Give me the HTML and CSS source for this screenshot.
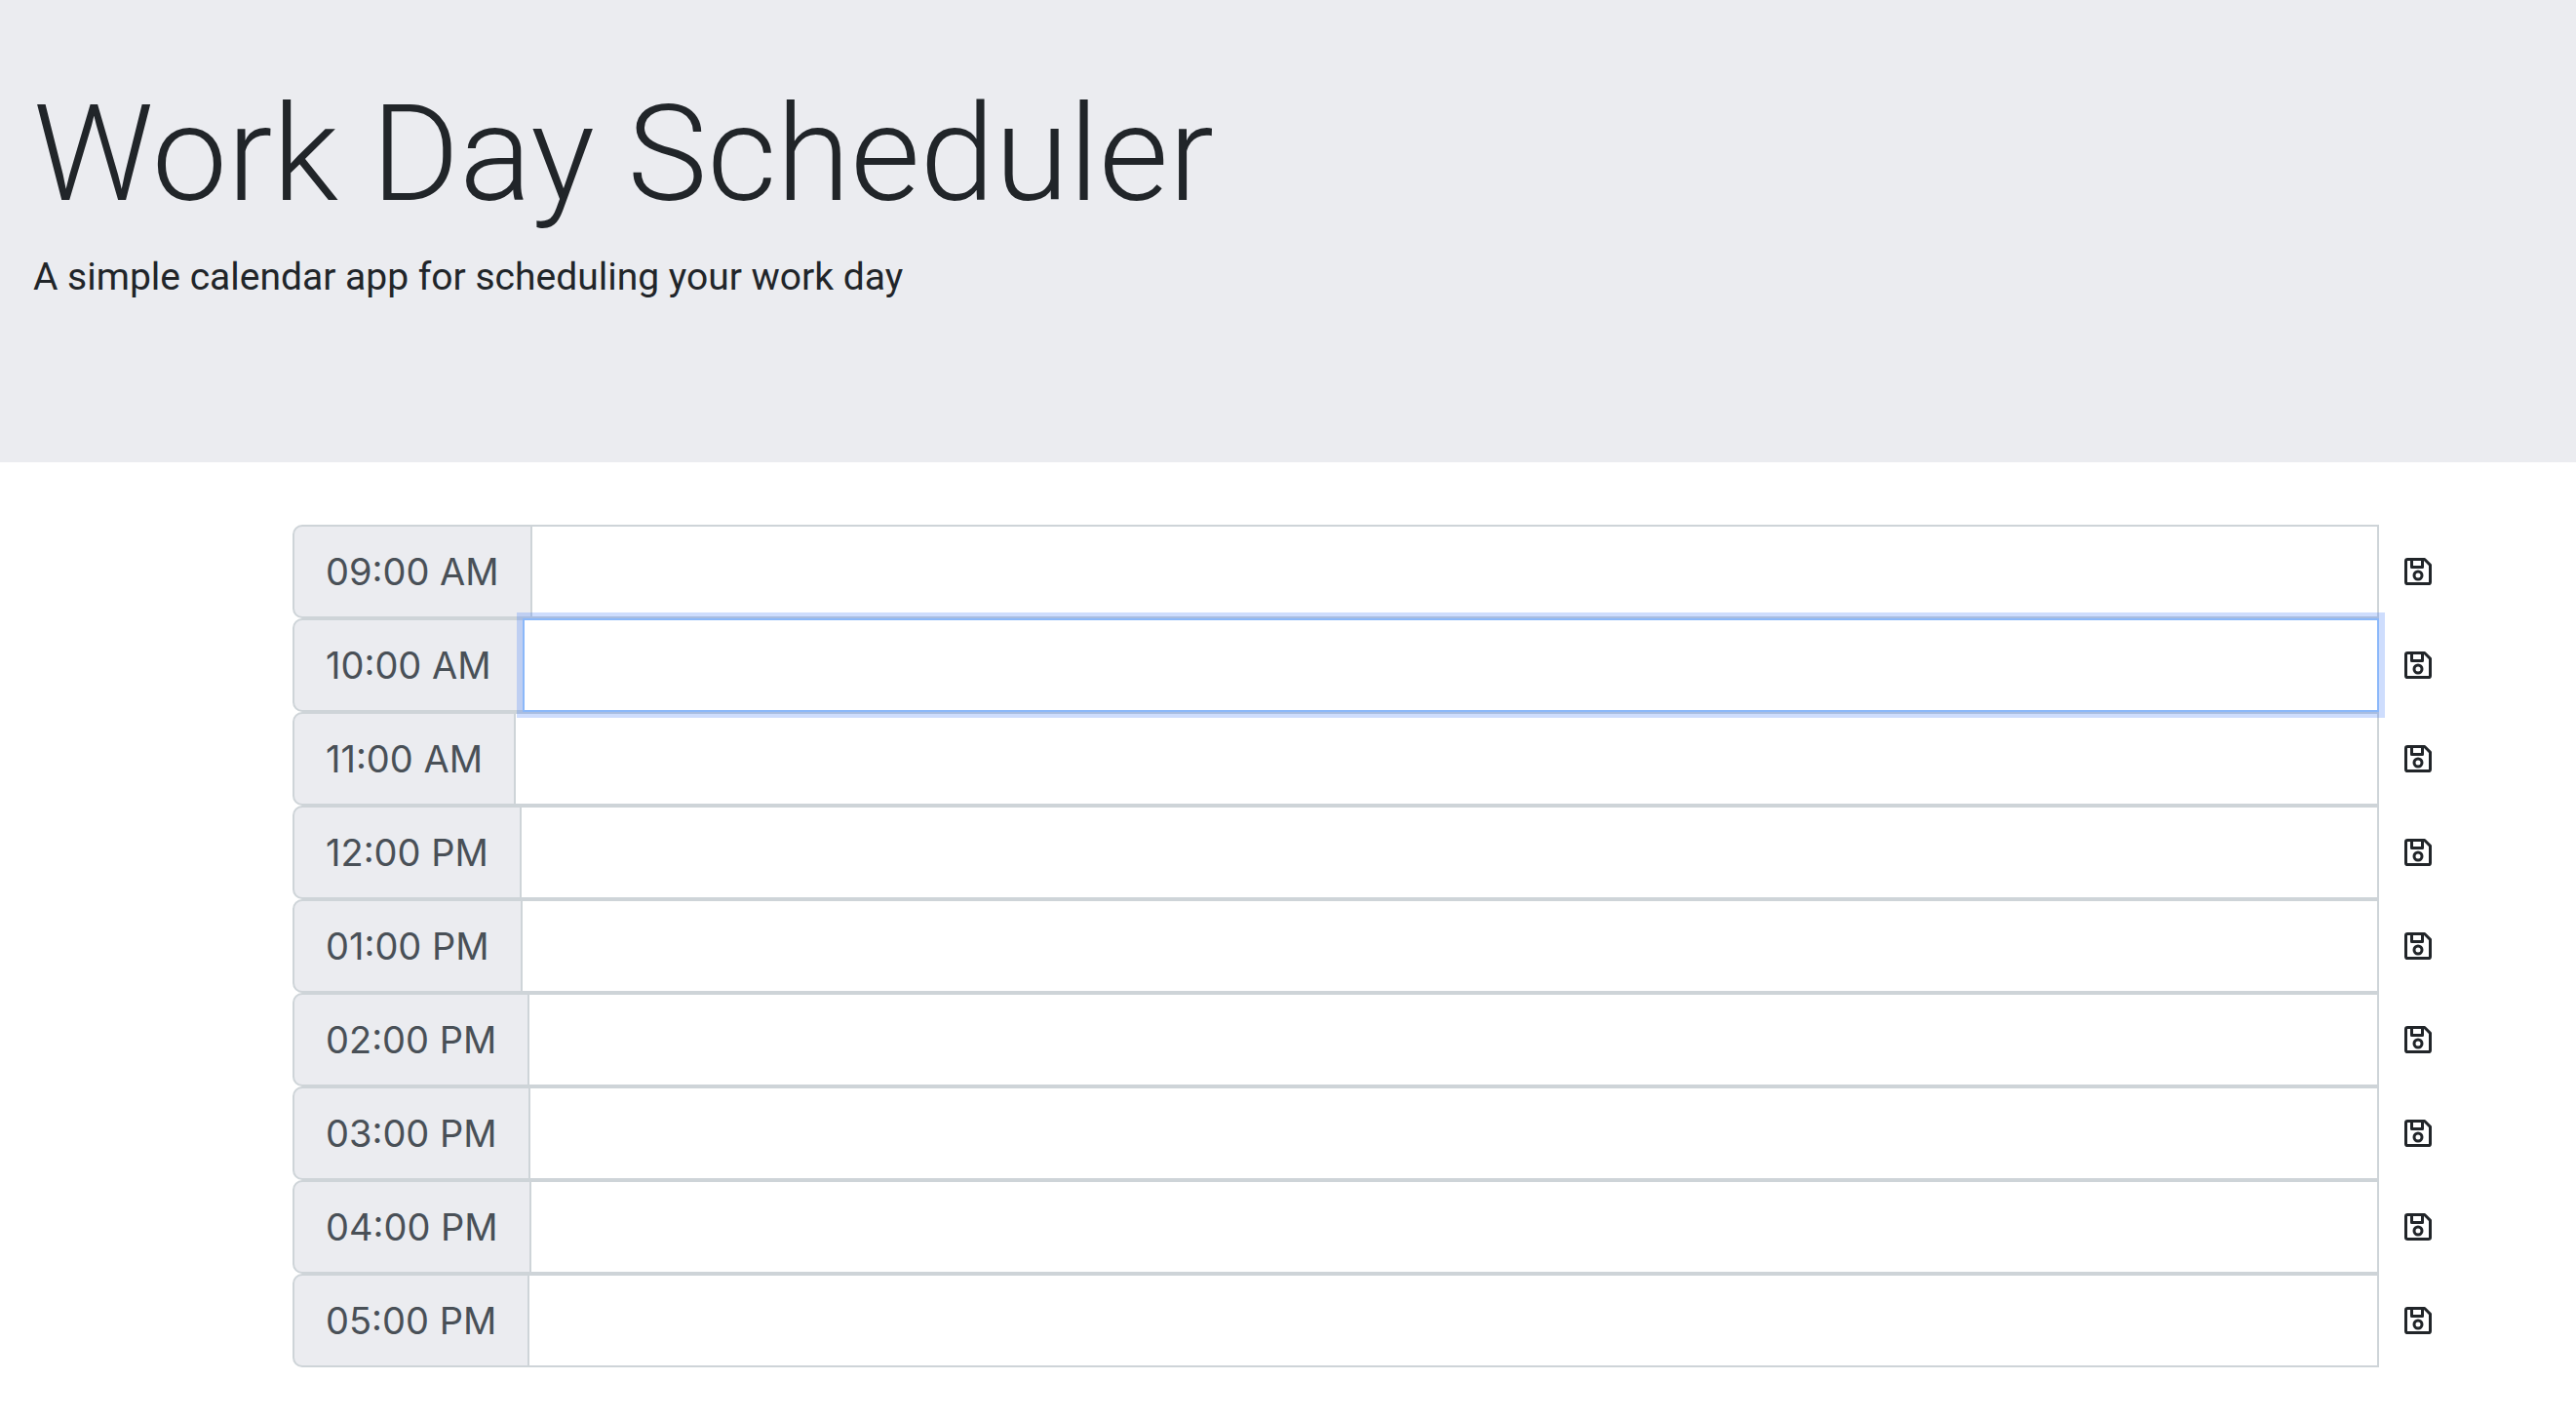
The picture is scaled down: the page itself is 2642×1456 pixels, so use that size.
FILE: index.html
```html
<!DOCTYPE html>
<html lang="en">
<head>
  <meta charset="utf-8">
  <meta name="viewport" content="width=device-width, initial-scale=1">
  <title>Work Day Scheduler</title>
  <link rel="stylesheet" href="styles.css">
</head>
<body>
  <svg class="sprite" aria-hidden="true">
    <symbol id="save" viewBox="0 0 84 84">
      <path d="M10 4.500H62L79.500 22V74Q79.500 79.500 74 79.500H10Q4.500 79.500 4.500 74V10Q4.500 4.500 10 4.500Z M22.500 5V28.500H55.500V5" fill="none" stroke="currentColor" stroke-width="9" stroke-linejoin="round"/>
      <circle cx="42" cy="54" r="12" fill="none" stroke="currentColor" stroke-width="9"/>
    </symbol>
  </svg>
  <header class="hero">
    <h1 class="hero-title">Work Day Scheduler</h1>
    <p class="hero-lead">A simple calendar app for scheduling your work day</p>
  </header>
  <main class="schedule">
    <div class="slot">
      <label class="slot-time" for="h09">09:00 AM</label>
      <input class="slot-input" id="h09" type="text">
      <button class="slot-save" type="button" aria-label="Save 09:00 AM"><svg class="icon"><use href="#save"/></svg></button>
    </div>
    <div class="slot">
      <label class="slot-time" for="h10">10:00 AM</label>
      <input class="slot-input is-active" id="h10" type="text">
      <button class="slot-save" type="button" aria-label="Save 10:00 AM"><svg class="icon"><use href="#save"/></svg></button>
    </div>
    <div class="slot">
      <label class="slot-time" for="h11">11:00 AM</label>
      <input class="slot-input" id="h11" type="text">
      <button class="slot-save" type="button" aria-label="Save 11:00 AM"><svg class="icon"><use href="#save"/></svg></button>
    </div>
    <div class="slot">
      <label class="slot-time" for="h12">12:00 PM</label>
      <input class="slot-input" id="h12" type="text">
      <button class="slot-save" type="button" aria-label="Save 12:00 PM"><svg class="icon"><use href="#save"/></svg></button>
    </div>
    <div class="slot">
      <label class="slot-time" for="h13">01:00 PM</label>
      <input class="slot-input" id="h13" type="text">
      <button class="slot-save" type="button" aria-label="Save 01:00 PM"><svg class="icon"><use href="#save"/></svg></button>
    </div>
    <div class="slot">
      <label class="slot-time" for="h14">02:00 PM</label>
      <input class="slot-input" id="h14" type="text">
      <button class="slot-save" type="button" aria-label="Save 02:00 PM"><svg class="icon"><use href="#save"/></svg></button>
    </div>
    <div class="slot">
      <label class="slot-time" for="h15">03:00 PM</label>
      <input class="slot-input" id="h15" type="text">
      <button class="slot-save" type="button" aria-label="Save 03:00 PM"><svg class="icon"><use href="#save"/></svg></button>
    </div>
    <div class="slot">
      <label class="slot-time" for="h16">04:00 PM</label>
      <input class="slot-input" id="h16" type="text">
      <button class="slot-save" type="button" aria-label="Save 04:00 PM"><svg class="icon"><use href="#save"/></svg></button>
    </div>
    <div class="slot">
      <label class="slot-time" for="h17">05:00 PM</label>
      <input class="slot-input" id="h17" type="text">
      <button class="slot-save" type="button" aria-label="Save 05:00 PM"><svg class="icon"><use href="#save"/></svg></button>
    </div>
  </main>
</body>
</html>
```

FILE: styles.css
```css
* {
  box-sizing: border-box;
}

body {
  margin: 0;
  background: #fff;
  color: #212529;
  font-family: Inter, "Liberation Sans", sans-serif;
  font-size: 38px;
  line-height: 60px;
}

.sprite {
  display: none;
}

.hero {
  padding: 74px 34px 160px;
  background: #ebecf0;
  font-family: Roboto, "Liberation Sans", sans-serif;
}

.hero-title {
  margin: 0 0 12px;
  font-size: 138px;
  font-weight: 300;
  line-height: 168px;
}

.hero-lead {
  margin: 0;
  font-size: 39px;
  font-weight: 400;
}

.schedule {
  padding: 64px 122px 54px 300px;
}

.slot {
  display: flex;
}

.slot-time {
  padding: 16px 32px;
  border: 2px solid #ced4d8;
  border-radius: 10px 0 0 10px;
  background: #ebecf0;
  color: #495057;
}

.slot-input {
  flex: 1;
  min-width: 0;
  margin-left: -2px;
  padding: 16px 32px;
  border: 2px solid #ced4d8;
  border-radius: 0;
  background: #fff;
  color: #495057;
  font: inherit;
  outline: 0;
}

.slot-input:focus,
.slot-input.is-active {
  position: relative;
  z-index: 1;
  border-color: #8bb8f9;
  box-shadow: 0 0 0 6px rgba(59, 119, 247, 0.25);
}

.slot-save {
  display: flex;
  align-items: center;
  padding: 0 26px;
  border: 0;
  background: transparent;
  color: #212529;
  cursor: pointer;
}

.icon {
  width: 28px;
  height: 28px;
}
```
